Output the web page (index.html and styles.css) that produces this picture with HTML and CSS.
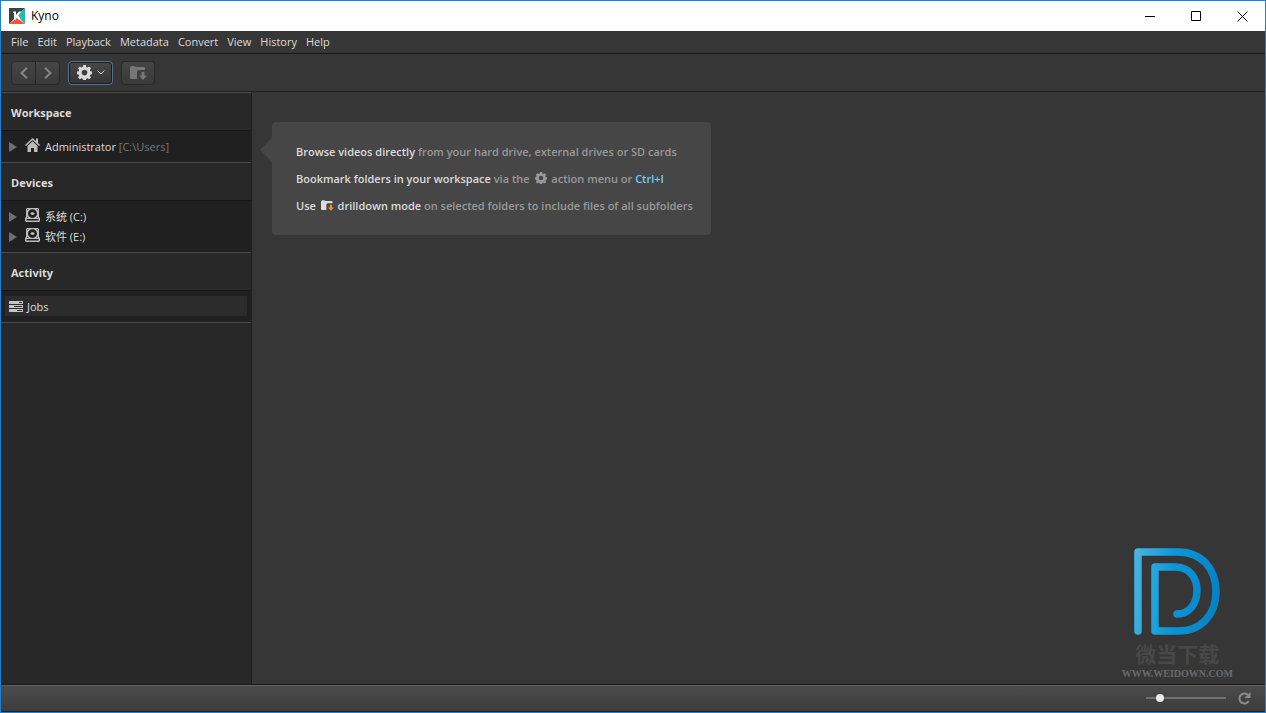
FILE: index.html
```html
<!DOCTYPE html>
<html lang="en">
<head>
<meta charset="utf-8">
<meta name="viewport" content="width=device-width, initial-scale=1">
<title>Kyno</title>
<link rel="stylesheet" href="styles.css">
</head>
<body>
<svg class="defs" aria-hidden="true">
  <symbol id="gear" viewBox="0 0 16 16">
    <path fill-rule="evenodd" d="M6.600 0h2.800l.4 2.100 1.300.6 1.800-1.200 2 2-1.200 1.800.6 1.300 2 .4v2.800l-2 .4-.6 1.300 1.200 1.800-2 2-1.800-1.200-1.300.6-.4 2.100H6.600l-.4-2.100-1.300-.6-1.800 1.200-2-2 1.200-1.800-.6-1.300-1.900-.4V7l1.900-.4.6-1.300L1.100 3.500l2-2 1.800 1.200 1.300-.6zM8 5.100a3 3 0 1 0 0 6 3 3 0 0 0 0-6z"/>
  </symbol>
  <symbol id="drill" viewBox="0 0 17 14">
    <path d="M0 2Q0 0 2 0h2q1 0 2 1h8q1 0 1 1v2H9Q7 4 7 6v7H1q-1 0-1-1z"/>
    <path class="drill-arrow" d="M11.500 6h3v3.500H17L13 14l-4-4.500h2.500z"/>
  </symbol>
  <symbol id="disk" viewBox="0 0 15 14">
    <path fill-rule="evenodd" d="M2 0h11l1 1v8l1 1v3l-1 1H1l-1-1v-3l1-1V1zM2.200 1.200v1.600L3.500 1.200zM12.800 1.200h-1.300l1.300 1.600zM2.200 8.500V10h1.300zM12.800 8.500 11.500 10h1.300zM1.500 11v1.500h12V11zM7.500 1.200C4.800 1.200 3 3.200 3 5.600S4.800 10 7.500 10 12 8 12 5.600 10.200 1.200 7.500 1.200z"/>
    <ellipse cx="7.500" cy="5.600" rx="2" ry="1.400"/>
  </symbol>
</svg>
<div class="window">
  <header class="titlebar">
    <svg class="app-logo" viewBox="0 0 16 16" aria-hidden="true">
      <path fill="#374349" d="M0 0h16L0 16z"/>
      <path fill="#22b7b1" d="M16 0v16L8 8z"/>
      <path fill="#f9503c" d="M0 16l8-6 8 6z"/>
      <path fill="#fff" d="M4 3.500h3V7l3-3.500h2.500L9.300 7.500l2.700 4H9.500L7 8.500v3H5V5H4z"/>
    </svg>
    <h1 class="app-name">Kyno</h1>
    <button class="win-button" aria-label="Minimize"><svg viewBox="0 0 11 11"><path d="M0 5.500h10"/></svg></button>
    <button class="win-button" aria-label="Maximize"><svg viewBox="0 0 11 11"><path d="M.5.5h9v9h-9z"/></svg></button>
    <button class="win-button" aria-label="Close"><svg viewBox="0 0 11 11"><path d="M.5.5l10 10M10.500.5l-10 10"/></svg></button>
  </header>
  <nav class="menubar">
    <button>File</button><button>Edit</button><button>Playback</button><button>Metadata</button><button>Convert</button><button>View</button><button>History</button><button>Help</button>
  </nav>
  <div class="toolbar">
    <div class="nav-pair">
      <button aria-label="Back"><svg viewBox="0 0 8 12"><path d="M7 .8 1.500 6 7 11.200"/></svg></button>
      <button aria-label="Forward"><svg viewBox="0 0 8 12"><path d="M1 .8 6.500 6 1 11.200"/></svg></button>
    </div>
    <button class="tool action" aria-label="Actions">
      <svg class="gear-icon"><use href="#gear"/></svg>
      <svg class="caret" viewBox="0 0 8 5"><path d="M.7.7 4 4 7.300.7"/></svg>
    </button>
    <button class="tool drill" aria-label="Drilldown"><svg class="drill-icon"><use href="#drill"/></svg></button>
  </div>
  <div class="content">
    <aside class="sidebar">
      <section>
        <h2>Workspace</h2>
        <ul>
          <li><span class="twisty"></span>
            <svg class="item-icon" viewBox="0 0 15 14"><path d="M7.500 0 0 7l1 1 6.500-6L14 8l1-1-2-2V0.500h-2V3z"/><path d="M7.500 3.200 2.500 8v6H6v-4h3v4h3.500V8z"/></svg>
            <span>Administrator <span class="path">[C:\Users]</span></span></li>
        </ul>
      </section>
      <section>
        <h2>Devices</h2>
        <ul>
          <li><span class="twisty"></span><svg class="item-icon"><use href="#disk"/></svg><span>系统 (C:)</span></li>
          <li><span class="twisty"></span><svg class="item-icon"><use href="#disk"/></svg><span>软件 (E:)</span></li>
        </ul>
      </section>
      <section>
        <h2>Activity</h2>
        <ul>
          <li class="jobs">
            <svg class="jobs-icon" viewBox="0 0 14 11"><path fill-rule="evenodd" d="M0 0h14v3H0zM10 1v1h3V1zM0 4h14v3H0zM5 5v1h8V5zM0 8h14v3H0zM8 9v1h5V9z"/></svg>
            <span>Jobs</span></li>
        </ul>
      </section>
    </aside>
    <main class="main">
      <div class="hint">
        <p><strong>Browse videos directly</strong> from your hard drive, external drives or SD cards</p>
        <p><strong>Bookmark folders in your workspace</strong> via the <svg class="hint-gear"><use href="#gear"/></svg> action menu or <kbd>Ctrl+I</kbd></p>
        <p><strong>Use <svg class="hint-drill"><use href="#drill"/></svg> drilldown mode</strong> on selected folders to include files of all subfolders</p>
      </div>
      <div class="watermark">
        <svg class="mark" viewBox="0 0 88 88" aria-hidden="true">
          <defs><linearGradient id="blue" gradientUnits="userSpaceOnUse" x1="0" y1="20" x2="88" y2="30">
            <stop offset="0" stop-color="#4ab5e2"/><stop offset=".45" stop-color="#0c98d8"/><stop offset="1" stop-color="#0581c4"/></linearGradient></defs>
          <path d="M5 84V5h40C69 5 83 22 83 44.500S69 84 45 84H22V20h20c14 0 22 10 22 23.500S56 67 44 67"/>
        </svg>
        <span class="mark-name" lang="zh">微当下载</span>
        <span class="mark-url">WWW.WEIDOWN.COM</span>
      </div>
    </main>
  </div>
  <footer class="statusbar">
    <input type="range" aria-label="Thumbnail size" min="0" max="100" value="14">
    <button aria-label="Refresh"><svg viewBox="0 0 13 13"><path class="ring" d="M10.800 9A5 5 0 1 1 9.800 2.800"/><path d="M12.500 0v6h-6z"/></svg></button>
  </footer>
</div>
</body>
</html>
```

FILE: styles.css
```css
* { box-sizing: border-box; }
body {
  margin: 0;
  font: 11px/16px "Open Sans", "Noto Sans CJK SC", sans-serif;
  color: #dcdcdc;
}
button {
  margin: 0;
  padding: 0;
  border: 0;
  background: none;
  color: inherit;
  font: inherit;
}
svg { display: block; fill: currentColor; }
h1, h2, p, ul { margin: 0; padding: 0; }
.defs { display: none; }

.window {
  display: flex;
  flex-direction: column;
  height: 100vh;
  border: 1px solid #1a80d8;
  background: #363636;
}

.titlebar {
  display: flex;
  align-items: center;
  height: 30px;
  padding-left: 8px;
  background: #fff;
  color: #000;
}
.app-logo { width: 16px; height: 16px; }
.app-name {
  flex: 1;
  padding-left: 6px;
  font-size: 12px;
  font-weight: 400;
}
.win-button {
  display: flex;
  align-items: center;
  justify-content: center;
  width: 46px;
  height: 30px;
}
.win-button svg {
  width: 11px;
  height: 11px;
  fill: none;
  stroke: #000;
}

.menubar {
  display: flex;
  gap: 9px;
  height: 23px;
  padding-left: 10px;
  border-bottom: 1px solid #181818;
}

.toolbar {
  display: flex;
  align-items: center;
  gap: 8px;
  height: 38px;
  padding-left: 10px;
  border-bottom: 1px solid #202020;
}
.nav-pair, .tool {
  display: flex;
  align-items: center;
  justify-content: center;
  height: 24px;
  border: 1px solid #282828;
  border-radius: 4px;
  background: linear-gradient(#454545, #3a3a3a);
  color: #858585;
}
.nav-pair button {
  display: flex;
  align-items: center;
  justify-content: center;
  width: 23px;
  height: 22px;
}
.nav-pair button + button {
  width: 24px;
  border-left: 1px solid #282828;
}
.nav-pair svg {
  width: 8px;
  height: 12px;
  fill: none;
  stroke: currentColor;
  stroke-width: 2;
}
.action {
  gap: 5px;
  width: 45px;
  border-color: #55718f;
  background: linear-gradient(#484848, #343434);
  box-shadow: inset 0 0 0 1px #1c1c1c;
  color: #dadada;
}
.gear-icon { width: 15px; height: 15px; }
.caret {
  width: 8px;
  height: 5px;
  fill: none;
  stroke: currentColor;
}
.drill { width: 34px; color: #777; }
.drill-icon { width: 17px; height: 14px; }

.content { display: flex; flex: 1; min-height: 0; }
.sidebar {
  width: 251px;
  border-top: 1px solid #4a4a4a;
  border-right: 1px solid #202020;
  background: #282828;
}
.sidebar section { border-bottom: 1px solid #4a4a4a; }
.sidebar h2 {
  height: 38px;
  padding: 2px 0 0 10px;
  border-bottom: 1px solid #181818;
  font-size: 11px;
  font-weight: 700;
  line-height: 36px;
}
.sidebar ul {
  padding: 5px 4px 6px;
  background: #202020;
  list-style: none;
}
.sidebar li {
  display: flex;
  align-items: center;
  height: 20px;
  padding-left: 4px;
}
.sidebar li > span:last-child { padding-top: 2px; }
.twisty {
  margin-top: 2px;
  border: solid transparent;
  border-width: 5px 0 5px 8px;
  border-left-color: #707070;
}
.item-icon {
  width: 15px;
  height: 14px;
  margin: 0 5px 2px 8px;
  color: #bcbcbc;
}
.path { color: #777; }
.sidebar .jobs { gap: 4px; background: #2c2c2c; }
.jobs-icon { width: 14px; height: 11px; color: #c4c4c4; }

.main {
  display: flex;
  flex: 1;
  flex-direction: column;
  align-items: flex-start;
  justify-content: space-between;
  padding: 30px 32px 3px 20px;
}
.hint {
  position: relative;
  display: flex;
  flex-direction: column;
  gap: 11px;
  padding: 22px 18px 21px 24px;
  border-radius: 4px;
  background: #464646;
  color: #999;
  font-weight: 600;
}
.hint::before {
  content: "";
  position: absolute;
  top: 16px;
  right: 100%;
  border: solid transparent;
  border-width: 12px 12px 12px 0;
  border-right-color: #464646;
}
.hint strong { color: #dcdcdc; font-weight: 600; }
.hint kbd { color: #6fcdf5; font: inherit; }
.hint svg { display: inline-block; vertical-align: -1px; }
.hint-gear { width: 12px; height: 12px; margin: 0 1px 0 3px; }
.hint-drill {
  --arrow: #f09020;
  width: 13px;
  height: 11px;
  margin: 0 1px 0 2px;
}
.drill-arrow { fill: var(--arrow, currentColor); }

.watermark {
  display: flex;
  flex-direction: column;
  align-items: center;
  align-self: flex-end;
}
.mark {
  width: 88px;
  height: 88px;
  fill: none;
  stroke: url(#blue);
  stroke-width: 7.500;
  stroke-linecap: round;
  stroke-linejoin: round;
}
.mark-name {
  padding-top: 4px;
  color: #484848;
  font: 700 21px/28px "Noto Sans CJK SC", sans-serif;
}
.mark-url {
  color: #6a6a6a;
  font: 700 10px/14px "Liberation Serif", serif;
}

.statusbar {
  display: flex;
  align-items: center;
  justify-content: flex-end;
  gap: 12px;
  height: 28px;
  padding-right: 14px;
  border-top: 1px solid #1a1a1a;
  border-bottom: 1px solid #242424;
  background: linear-gradient(#4c4c4c, #3c3c3c);
  box-shadow: inset 0 1px #606060;
}
.statusbar input {
  width: 80px;
  height: 10px;
  margin: 0;
  appearance: none;
  background: linear-gradient(#707070, #707070) center / 100% 2px no-repeat;
}
.statusbar input::-webkit-slider-thumb {
  width: 8px;
  height: 8px;
  border-radius: 50%;
  appearance: none;
  background: #ececec;
}
.statusbar svg { width: 13px; height: 13px; color: #8c8c8c; }
.ring { fill: none; stroke: currentColor; stroke-width: 2; }
```
